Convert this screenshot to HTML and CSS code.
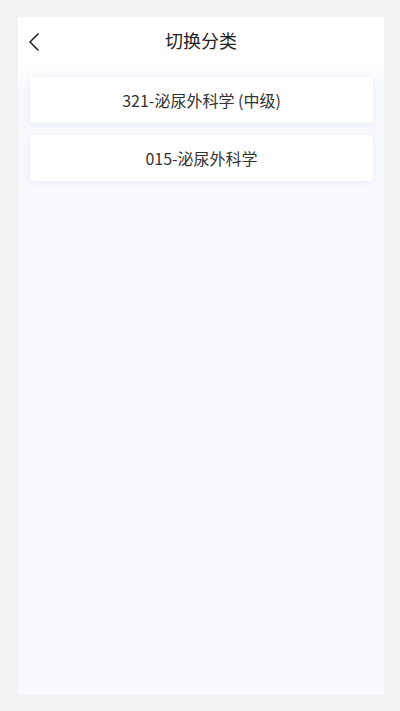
FILE: index.html
```html
<!DOCTYPE html>
<html lang="zh">
<head>
<meta charset="utf-8">
<link rel="stylesheet" href="styles.css">
</head>
<body>
<div class="frame">
  <header class="topbar">
    <span class="back">
      <svg width="14" height="20" viewBox="0 0 14 20"><path d="M11 2 L3 10 L11 18" fill="none" stroke="#222" stroke-width="1.6" stroke-linecap="round" stroke-linejoin="round"/></svg>
    </span>
    <h1 class="title">切换分类</h1>
  </header>
  <main class="list">
    <div class="card">321-泌尿外科学 (中级)</div>
    <div class="card">015-泌尿外科学</div>
  </main>
</div>
</body>
</html>
```

FILE: styles.css
```css
html, body {
  margin: 0;
  padding: 0;
}
body {
  background: #f2f2f2;
  font-family: "Noto Sans CJK SC", "Noto Sans", sans-serif;
  color: #333;
  padding: 17px 16px 16px 18px;
  box-sizing: border-box;
  height: 711px;
}
.frame {
  height: 678px;
  background: linear-gradient(#ffffff 0px, #ffffff 45px, #f7f9fd 75px, #f9fafd 100%);
  display: flex;
  flex-direction: column;
}
.topbar {
  height: 45px;
  display: flex;
  align-items: center;
  justify-content: center;
  position: relative;
}
.back {
  position: absolute;
  left: 9px;
  top: 15px;
  display: flex;
}
.title {
  margin: 0;
  font-size: 18px;
  font-weight: 400;
  color: #222;
  line-height: 1;
}
.list {
  padding: 15px 11px 0 12px;
  display: flex;
  flex-direction: column;
  gap: 12px;
}
.card {
  height: 46px;
  background: #ffffff;
  display: flex;
  align-items: center;
  justify-content: center;
  font-size: 16px;
  color: #333;
  padding-bottom: 1px;
  box-sizing: border-box;
  box-shadow: 0 1px 6px rgba(200, 210, 235, 0.35);
}
```
